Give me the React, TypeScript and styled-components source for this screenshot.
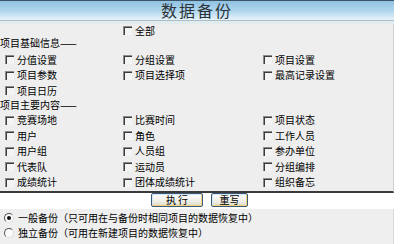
import styled, { createGlobalStyle } from 'styled-components'

const GlobalStyle = createGlobalStyle`
  html, body { margin: 0; padding: 0; background: #fff; }
  body {
    font-family: 'Noto Sans CJK SC', 'Noto Sans', sans-serif;
    font-size: 10px;
    color: #000;
  }
`

const Page = styled.div`
  width: 394px;
  height: 244px;
  overflow: hidden;
`

const Header = styled.div`
  height: 20px;
  box-sizing: border-box;
  border-top: 1px solid #3b5566;
  background: linear-gradient(#8fc2e2, #b3d8ee 55%, #e8f4fa);
  text-align: center;
`

const Title = styled.h1`
  margin: 0;
  font-size: 16px;
  line-height: 19px;
  font-weight: normal;
  color: #2c3338;
  letter-spacing: 2px;
`

const Strip = styled.div`
  height: 4px;
  box-sizing: border-box;
  border-top: 1px solid #a9bec9;
  background: #e2ebee;
`

const Panel = styled.div`
  background: #eeeeee;
  border-right: 1px solid #cfcfcf;
  border-bottom: 2px solid #3a3a3a;
  padding-bottom: 1px;
`

const Row = styled.div<{ $h: number }>`
  display: grid;
  grid-template-columns: 118px 140px 1fr;
  padding-left: 5px;
  height: ${(p) => p.$h}px;
  align-items: center;
`

const Section = styled.div<{ $top?: number }>`
  margin-top: ${(p) => p.$top ?? 0}px;
`

const Label = styled.div`
  height: 12px;
  line-height: 12px;
  white-space: nowrap;
`

const Item = styled.label`
  display: flex;
  align-items: center;
  gap: 3px;
  white-space: nowrap;
  line-height: 12px;
`

const Box = styled.span`
  width: 8px;
  height: 8px;
  flex: none;
  border-top: 1px solid #8a8a8a;
  border-left: 1px solid #8a8a8a;
  box-shadow: inset 1px 1px 0 #3c3c3c;
  background: #f4f4f4;
`

const Actions = styled.div`
  height: 16px;
  display: flex;
  gap: 8px;
  padding-left: 151px;
  background: #fff;
`

const Button = styled.button<{ $w: number }>`
  width: ${(p) => p.$w}px;
  height: 14px;
  padding: 0;
  font-family: inherit;
  font-size: 10px;
  line-height: 12px;
  color: #000;
  border: 1px solid #3b5a78;
  border-radius: 2px;
  background: linear-gradient(#ffffff, #f0efe6 60%, #dcd9c8);
  box-shadow: inset -1px -1px 0 #f2d27a, inset 1px 1px 0 #d6e6f5;
`

const Options = styled.div`
  background: #efefef;
  border-right: 1px solid #d8d8d8;
  padding-top: 1px;
  height: 40px;
`

const Option = styled.label`
  display: flex;
  align-items: center;
  gap: 4px;
  height: 15px;
  padding-left: 4px;
  white-space: nowrap;
`

const Radio = styled.span<{ $on?: boolean }>`
  width: 8px;
  height: 8px;
  flex: none;
  border-radius: 50%;
  border: 1px solid;
  border-color: #555 #ddd #ddd #555;
  background: #fafafa;
  position: relative;
  &::after {
    content: '';
    display: ${(p) => (p.$on ? 'block' : 'none')};
    position: absolute;
    left: 2px;
    top: 2px;
    width: 4px;
    height: 4px;
    border-radius: 50%;
    background: #111;
  }
`

const Check = ({ text }: { text: string }) => (
  <Item>
    <Box />
    {text}
  </Item>
)

const basic = [
  ['分值设置', '分组设置', '项目设置'],
  ['项目参数', '项目选择项', '最高记录设置'],
  ['项目日历'],
]

const main = [
  ['竞赛场地', '比赛时间', '项目状态'],
  ['用户', '角色', '工作人员'],
  ['用户组', '人员组', '参办单位'],
  ['代表队', '运动员', '分组编排'],
  ['成绩统计', '团体成绩统计', '组织备忘'],
]

export default function App() {
  return (
    <Page>
      <GlobalStyle />
      <Header>
        <Title>数据备份</Title>
      </Header>
      <Strip />
      <Panel>
        <Row $h={13}>
          <span />
          <Check text="全部" />
        </Row>
        <Label>项目基础信息——</Label>
        <Section $top={3}>
          {basic.map((r, i) => (
            <Row key={i} $h={15.5}>
              {r.map((t) => (
                <Check key={t} text={t} />
              ))}
            </Row>
          ))}
        </Section>
        <Label>项目主要内容——</Label>
        <Section $top={2}>
          {main.map((r, i) => (
            <Row key={i} $h={15.5}>
              {r.map((t) => (
                <Check key={t} text={t} />
              ))}
            </Row>
          ))}
        </Section>
      </Panel>
      <Actions>
        <Button $w={52}>执 行</Button>
        <Button $w={37}>重写</Button>
      </Actions>
      <Options>
        <Option>
          <Radio $on />
          一般备份（只可用在与备份时相同项目的数据恢复中）
        </Option>
        <Option>
          <Radio />
          独立备份（可用在新建项目的数据恢复中）
        </Option>
      </Options>
    </Page>
  )
}
